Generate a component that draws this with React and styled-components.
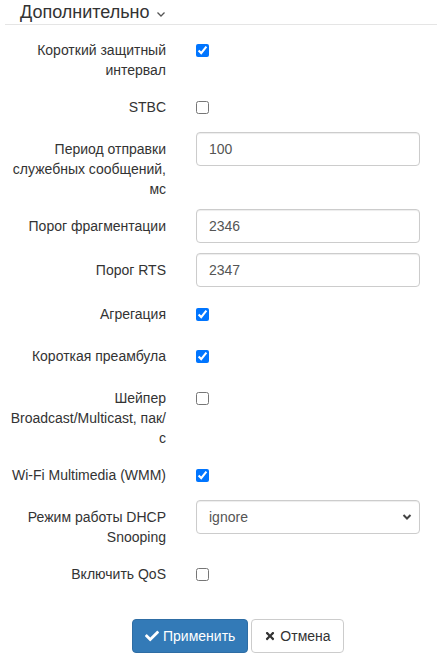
import styled, { createGlobalStyle } from 'styled-components';
import { FaCheck, FaTimes } from 'react-icons/fa';

const GlobalStyle = createGlobalStyle`
    body {
        margin: 0;
        background: #fff;
        font-family: 'Liberation Sans', Arial, sans-serif;
        font-size: 14px;
        line-height: 20px;
        color: #333;
    }
    * {
        box-sizing: border-box;
    }
`;

const Fieldset = styled.fieldset`
    margin: 0 0 0 5px;
    padding: 0;
    border: none;
    min-width: 0;
`;

const Legend = styled.div`
    display: flex;
    align-items: center;
    gap: 6px;
    height: 25px;
    padding-left: 15px;
    border-bottom: 1px solid #e5e5e5;
    margin-bottom: 8px;
    font-size: 18px;
    line-height: 22px;
    color: #333;
    svg {
        margin-top: 3px;
    }
`;

const Row = styled.div`
    display: flex;
    align-items: flex-start;
    gap: 30px;
    margin-bottom: 10px;
    min-height: ${(p) => (p.$check ? '32px' : '34px')};
`;

const Label = styled.label`
    width: 161px;
    flex: none;
    padding-top: 7px;
    text-align: right;
`;

const Control = styled.div`
    width: 224px;
    flex: none;
    position: relative;
`;

const CheckWrap = styled.div`
    padding-top: 11px;
    input {
        display: block;
        margin: 0;
        width: 13px;
        height: 13px;
    }
`;

const Input = styled.input`
    display: block;
    width: 100%;
    height: 34px;
    padding: 6px 12px;
    border: 1px solid #ccc;
    border-radius: 4px;
    font-family: inherit;
    font-size: 14px;
    color: #555;
    background: #fff;
    box-shadow: inset 0 1px 1px rgba(0, 0, 0, 0.075);
`;

const Select = styled.select`
    display: block;
    width: 100%;
    height: 34px;
    padding: 6px 12px;
    border: 1px solid #ccc;
    border-radius: 4px;
    font-family: inherit;
    font-size: 14px;
    color: #555;
    background: #fff;
    appearance: none;
    box-shadow: inset 0 1px 1px rgba(0, 0, 0, 0.075);
`;

const Arrow = styled.svg`
    position: absolute;
    right: 8px;
    top: 13px;
    pointer-events: none;
`;

const Actions = styled.div`
    display: flex;
    gap: 3px;
    padding: 20px 0 0 127px;
`;

const Button = styled.button`
    display: inline-flex;
    align-items: center;
    gap: 4px;
    height: 34px;
    padding: 6px 12px;
    border-radius: 4px;
    font-family: inherit;
    font-size: 14px;
    border: 1px solid ${(p) => (p.$primary ? '#2e6da4' : '#ccc')};
    background: ${(p) => (p.$primary ? '#337ab7' : '#fff')};
    color: ${(p) => (p.$primary ? '#fff' : '#333')};
    svg {
        width: ${(p) => (p.$primary ? '14px' : '12px')};
        height: ${(p) => (p.$primary ? '14px' : '12px')};
    }
`;

function CheckRow({ label, checked }) {
    return (
        <Row $check>
            <Label>{label}</Label>
            <Control>
                <CheckWrap>
                    <input type="checkbox" defaultChecked={checked} />
                </CheckWrap>
            </Control>
        </Row>
    );
}

function InputRow({ label, value }) {
    return (
        <Row>
            <Label>{label}</Label>
            <Control>
                <Input defaultValue={value} />
            </Control>
        </Row>
    );
}

export default function App() {
    return (
        <>
            <GlobalStyle />
            <Fieldset>
                <Legend>
                    Дополнительно
                    <svg width="10" height="10" viewBox="0 0 10 10">
                        <path
                            d="M1.5 3.5 L5 7 L8.5 3.5"
                            fill="none"
                            stroke="#555"
                            strokeWidth="1.3"
                        />
                    </svg>
                </Legend>
                <CheckRow label="Короткий защитный интервал" checked />
                <CheckRow label="STBC" />
                <InputRow
                    label="Период отправки служебных сообщений, мс"
                    value="100"
                />
                <InputRow label="Порог фрагментации" value="2346" />
                <InputRow label="Порог RTS" value="2347" />
                <CheckRow label="Агрегация" checked />
                <CheckRow label="Короткая преамбула" checked />
                <CheckRow label="Шейпер Broadcast/Multicast, пак/с" />
                <CheckRow label="Wi-Fi Multimedia (WMM)" checked />
                <Row>
                    <Label>Режим работы DHCP Snooping</Label>
                    <Control>
                        <Select defaultValue="ignore">
                            <option value="ignore">ignore</option>
                            <option value="enable">enable</option>
                        </Select>
                        <Arrow width="10" height="8" viewBox="0 0 10 8">
                            <path
                                d="M1.5 2 L5 5.5 L8.5 2"
                                fill="none"
                                stroke="#444"
                                strokeWidth="2"
                            />
                        </Arrow>
                    </Control>
                </Row>
                <CheckRow label="Включить QoS" />
                <Actions>
                    <Button $primary>
                        <FaCheck />
                        Применить
                    </Button>
                    <Button>
                        <FaTimes />
                        Отмена
                    </Button>
                </Actions>
            </Fieldset>
        </>
    );
}
